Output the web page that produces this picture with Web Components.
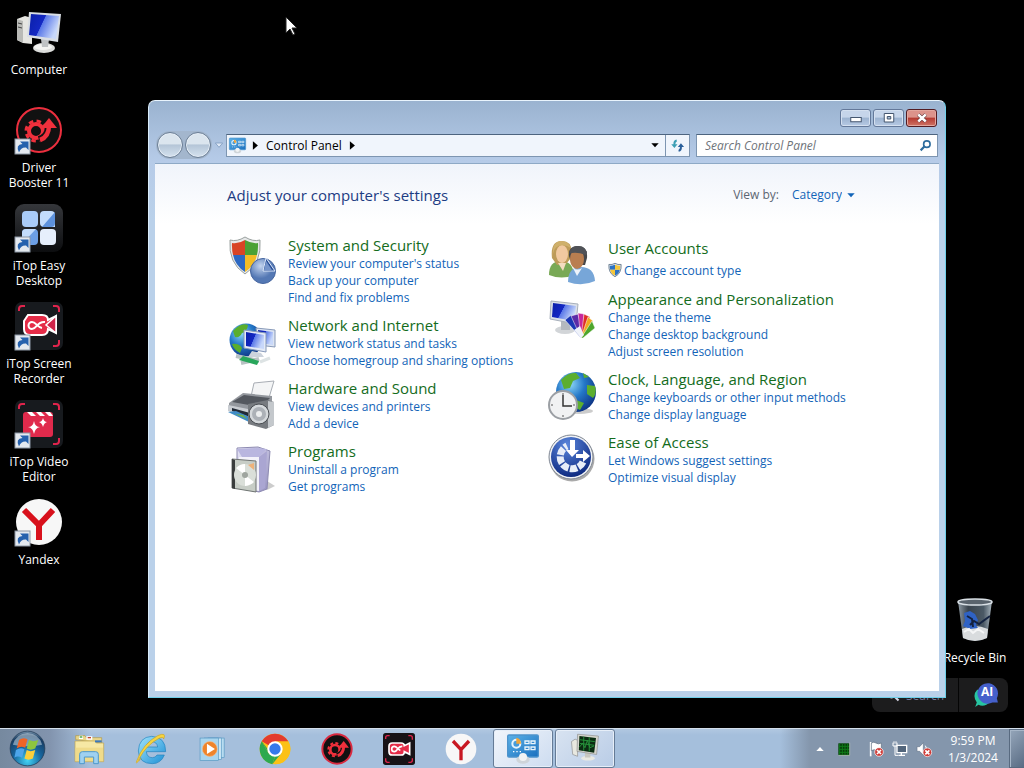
<!DOCTYPE html>
<html lang="en">
<head>
<meta charset="utf-8">
<meta name="viewport" content="width=device-width, initial-scale=1">
<title>Control Panel</title>
<style>
    html, body {
        margin: 0;
        height: 100%;
        background: #000;
        font-family: "Segoe UI", "Open Sans", sans-serif;
        font-size: 12px;
        overflow: hidden;
    }
</style>
</head>
<body>
<desktop-shell></desktop-shell>

<script>
const SHORTCUT = `
    <rect x="0" y="33" width="15" height="15" fill="#e4e9ef" stroke="#8d98a5"/>
    <path d="M4 46.500q-4-8 3.500-8.500L5 35.500h8.500V44l-2.500-2.500q-5-.5-7 5z" fill="#2561ad"/>`;

const GEAR = `
    <g fill="none" stroke="#f0303c">
        <circle cx="21" cy="25" r="7" stroke-width="4"/>
        <circle cx="21" cy="25" r="10" stroke-width="3" stroke-dasharray="4.5 3.4"/>
        <path d="M24 34c7-2 10-8 10-14" stroke="#111" stroke-width="8"/>
        <path d="M25 34c6-2 9-7 9-15" stroke-width="4.500"/>
    </g>
    <path d="M26 22l8-10 8 10z" fill="#f0303c"/>
    <circle cx="21" cy="25" r="4" fill="#111"/>`;

const CORNERS = `
    <path d="M4 9V7q0-3 3-3h3M38 4h3q3 0 3 3v3M44 38v3q0 3-3 3h-3" fill="none" stroke="#e0244c" stroke-width="2"/>`;

const GLOBE_DEFS = `
    <radialGradient id="sea" cx=".35" cy=".3" r=".8">
        <stop offset="0" stop-color="#8fd8f8"/><stop offset=".45" stop-color="#2478c8"/><stop offset="1" stop-color="#0b2c7c"/>
    </radialGradient>`;

const SCREEN_DEFS = `
    <linearGradient id="scr" x1="0" x2="1" y2=".4">
        <stop offset="0" stop-color="#0a1fa8"/><stop offset=".5" stop-color="#1428c4"/>
        <stop offset=".52" stop-color="#5a78e8"/><stop offset="1" stop-color="#c8d8fa"/>
    </linearGradient>`;

const ICONS = {
    computer: `<defs>${SCREEN_DEFS}</defs>
        <path d="M2 11l8-3 7 2v26l-9-1-6-3z" fill="#e6e6e2"/><path d="M2 11l6 2v22l-6-3z" fill="#b9bab7"/>
        <path d="M3 15l4 1M3 19l4 1" stroke="#444"/>
        <ellipse cx="29" cy="40" rx="11" ry="5" fill="#dcdddb"/><ellipse cx="28" cy="39" rx="9" ry="3" fill="#f4f4f2"/>
        <path d="M26 31h8l-1 8h-6z" fill="#bfc2c4"/>
        <path d="M14 4l32 2-3 28-31-5z" fill="#d9dee4"/><path d="M16 6l28 2-3 23-27-4z" fill="url(#scr)"/>`,
    booster: `<circle cx="24" cy="24" r="22" fill="#111" stroke="#ec2f3e" stroke-width="2"/>${GEAR}${SHORTCUT}`,
    easy: `<defs><linearGradient id="bg" y2="1" x2="0"><stop offset="0" stop-color="#35373b"/><stop offset="1" stop-color="#0c0d0f"/></linearGradient></defs>
        <rect width="48" height="48" rx="9" fill="url(#bg)"/>
        <rect x="7" y="7" width="16" height="16" rx="4" fill="#a9cbf7"/><path d="M29 7h7q4 0 4 4v12H29q-4 0-4-4v-8q0-4 4-4z" fill="#c3dcfb"/>
        <path d="M40 8v11q0 4-4 4h-9z" fill="#5e92dc"/><rect x="7" y="25" width="16" height="16" rx="4" fill="#6c9fe5"/>
        <path d="M7 40V29q0-4 4-4h10z" fill="#c3dcfb"/><rect x="25" y="25" width="16" height="16" rx="4" fill="#e6effc"/>${SHORTCUT}`,
    recorder: `<rect width="48" height="48" rx="7" fill="#171a1e"/>${CORNERS}
        <path d="M13 13h14q6 0 6 5l8-4v17l-8-4q0 6-6 6H15q-6 0-6-6V19z" fill="#e52c48" stroke="#fff" stroke-width="2"/>
        <path d="M41 14l-10 9 10 8z" fill="#ce244a" stroke="#fff" stroke-width="1.500"/>
        <path d="M30 20c-8-1-8 7-13 7a3 3 0 0 1 0-7c4 0 5 5 10 6" fill="none" stroke="#fff" stroke-width="2"/>${SHORTCUT}`,
    recorderbar: `<rect width="48" height="48" rx="4" fill="#171317"/>${CORNERS}<path d="M4 38v3q0 3 3 3h3" fill="none" stroke="#e0244c" stroke-width="2"/>
        <path d="M14 15h13q5 0 5 4l8-4v17l-8-4q0 5-5 5H14q-5 0-5-5v-8q0-5 5-5z" fill="#e52c48" stroke="#fff" stroke-width="2.500"/>
        <path d="M29 20c-7-1-7 8-12 8a3 3 0 0 1 0-8c4 0 5 5 9 6" fill="none" stroke="#fff" stroke-width="2.500"/>`,
    video: `<rect width="48" height="48" rx="7" fill="#171a1e"/>${CORNERS}
        <rect x="8" y="12" width="30" height="25" rx="3" fill="#e02a4c"/>
        <path d="M12 12h5l4 4h-5zM21 12h5l4 4h-5zM30 12h5l3 4h-4z" fill="#fff"/>
        <path d="M19 21q1 6 6 6-5 1-6 7-1-6-6-7 5 0 6-6zM28 18q1 4 4 4-3 1-4 5-1-4-4-5 3 0 4-4z" fill="#fff"/>${SHORTCUT}`,
    yandex: `<circle cx="24" cy="24" r="23" fill="#f7f7f7"/>
        <path d="M9 12l15 15 14-15M24 26v16" fill="none" stroke="#d8111c" stroke-width="6"/>${SHORTCUT}`,
    yandexbar: `<circle cx="24" cy="24" r="23" fill="#f7f7f7"/><path d="M12 12l12 13 12-13M24 24v17" fill="none" stroke="#c81822" stroke-width="5"/>`,
    boosterbar: `<circle cx="24" cy="24" r="22" fill="#111" stroke="#d92a40" stroke-width="3"/>${GEAR}`,
    bin: `<defs><linearGradient id="glass"><stop offset="0" stop-color="#8e9aa4"/><stop offset=".3" stop-color="#39434d"/><stop offset=".75" stop-color="#4b5965"/><stop offset="1" stop-color="#a8b4bd"/></linearGradient></defs>
        <path d="M7 5h34l-5 37q-12 6-24 0z" fill="url(#glass)"/><path d="M11 33q12-6 26 0l-1 9q-12 6-24 0z" fill="#d9dcde"/>
        <path d="M13 17l6-2 5 3 3 6-2 5 2 3-8 1-7-3 2-5z" fill="#2f62c4"/><path d="M16 20l5 3 1 8M19 29l4-4 5 3 11-8" stroke="#132240" stroke-width="2" fill="none"/>
        <path d="M13 36l5-3 4 4 5-4 6 4" stroke="#f4f5f6" stroke-width="2" fill="none"/>
        <ellipse cx="24" cy="6" rx="17" ry="3" fill="#59636d" stroke="#d9e0e6" stroke-width="1.500"/>`,
    security: `<defs><clipPath id="sh"><path d="M17 3q7 4 13 3 1 20-13 29Q3 26 4 6q7 1 13-3z"/></clipPath>
        <radialGradient id="ball" cx=".4" cy=".3"><stop offset="0" stop-color="#c3d4ef"/><stop offset="1" stop-color="#5478b4"/></radialGradient></defs>
        <path d="M17 0q8 5 15 3 2 23-15 34Q0 26 2 3q7 2 15-3z" fill="#e6e8e8" stroke="#9aa19f"/>
        <g clip-path="url(#sh)"><path d="M0 0h17v18H0z" fill="#d84425"/><path d="M17 0h17v18H17z" fill="#4ba135"/><path d="M0 18h17v20H0z" fill="#2c68c2"/><path d="M17 18h17v20H17z" fill="#f3bc24"/></g>
        <circle cx="35" cy="34" r="12.500" fill="url(#ball)" stroke="#45659f"/><path d="M35 34l3-13 9 13z" fill="#294f97" stroke="#dce8fa"/><path d="M36 33l2-9 6 9z" fill="#7594ca"/>`,
    network: `<defs>${GLOBE_DEFS}${SCREEN_DEFS}</defs><g transform="translate(0 2)"><circle cx="18" cy="21" r="16.500" fill="url(#sea)"/>
        <path d="M5 12q8-9 15-6-1 7-6 8-2 5-7 4zM4 25q7-1 10 4l-2 5q-6-3-8-9z" fill="#5aae2c"/>
        <path d="M28 9l19 2v17l-17-2z" fill="#dce4f2" stroke="#8799b8"/><path d="M30 11l15 2v13l-13-2z" fill="url(#scr)"/>
        <path d="M16 11l22 3v19l-22-4z" fill="#e4ebf7" stroke="#8799b8"/><path d="M18 13l18 3v14l-18-3z" fill="url(#scr)"/>
        <path d="M24 32l9 2 3 4H20z" fill="#ccd3dc"/><path d="M8 37l23 5M13 44l18-4" stroke="#b8c2c3" stroke-width="4"/><path d="M15 37l16 5-2 4-18-5z" fill="#29a65b"/><path d="M32 43l10-4" stroke="#dde3e4" stroke-width="3"/></g>`,
    hardware: `<path d="M26 3l20-2-6 20H22z" fill="#f4f5f6" stroke="#a8adb4"/><path d="M1 23l14-10 29 3v14l-18 9L1 30z" fill="#94989e"/>
        <path d="M4 22l12-7 26 3-9 9z" fill="#54585f"/><path d="M0 25l25 5v11L0 31z" fill="#c9cdd2"/><path d="M4 28l18 5v4l-18-6z" fill="#222a36"/>
        <path d="M0 32l8-1 16 7-3 4z" fill="#3f8cc7"/><path d="M7 34l8 1 4 4z" fill="#75b247"/>
        <path d="M20 24l20-4 6 2v23l-8 4-18-5z" fill="#777b80"/><path d="M40 21l6 1v23l-6 3z" fill="#c4c8cc"/>
        <circle cx="31" cy="34" r="10" fill="#d5d9dc" stroke="#494d52"/><circle cx="31" cy="34" r="7" fill="#acb1b7"/><circle cx="31" cy="34" r="3" fill="#eceeef"/>`,
    programs: `<defs><linearGradient id="box" x2="1" y2="1"><stop offset="0" stop-color="#e8e7f7"/><stop offset="1" stop-color="#9490bf"/></linearGradient></defs>
        <g transform="translate(0 2)"><path d="M39 45l8-4-8-5z" fill="#ccc"/><path d="M9 3l21-1 12 4-3 38-8 3-22-5z" fill="url(#box)" stroke="#8d8ab1"/>
        <path d="M9 4l5 8h17l8-8-10-1z" fill="#b9b6df"/><path d="M11 12h20v34l-20-3z" fill="#f3f2fa"/><path d="M31 12l8-6-2 37-6 3z" fill="#aaa6d2"/>
        <path d="M4 14l24 2v31L4 43z" fill="#c7cdc6" stroke="#6e7371"/><path d="M4 14l3 1v29l-3-1z" fill="#3a3d3d"/>
        <circle cx="17" cy="30" r="11" fill="#dadfd9"/><path d="M17 30L8 23q4-4 9-4zM17 30l9 7q-3 3-9 4z" fill="#fff"/><path d="M20 20l6-2v7z" fill="#eeb27a"/><circle cx="17" cy="30" r="3" fill="#9fa59f"/></g>`,
    users: `<path d="M1 35q0-14 12-14t13 14q-12 5-25 0z" fill="#79a956"/><path d="M4 18Q2 1 14 1t9 17l-5 6-9 1z" fill="#bd9b59"/><ellipse cx="14" cy="14" rx="6" ry="9" fill="#f1c9a0"/>
        <path d="M5 14Q7 3 19 6l4 2Q20 0 12 1 3 3 5 18z" fill="#cfb06b"/><path d="M10 23h8l-3 8z" fill="#f4dcc0"/>
        <path d="M20 42q0-15 13-15t14 14q-13 6-27 1z" fill="#77a6d8"/><path d="M21 16Q20 6 30 6t9 12l-2 7H24z" fill="#46474a"/>
        <ellipse cx="29" cy="19" rx="7" ry="10" fill="#b97e50"/><path d="M21 14q6-3 17 1l1-3q-3-7-11-6-6 1-7 8z" fill="#505257"/><path d="M25 28q4 3 9 0l-5 8z" fill="#eef4fb"/>`,
    appearance: `<defs>${SCREEN_DEFS}</defs><g transform="translate(1 10)"><ellipse cx="16" cy="29" rx="10" ry="4" fill="#d2d5d8"/><path d="M12 20h9v9h-9z" fill="#b4b9bf"/>
        <path d="M2 0l27 3-2 20L1 18z" fill="#dce1e8" stroke="#a8b0bb"/><path d="M4 2l23 3-2 15L3 16z" fill="url(#scr)"/>
        <g stroke="#fff" stroke-width=".5"><path d="M32 37L16 19l6-5 12 20z" fill="#1b37b5"/><path d="M32 37L22 15l7-2 6 21z" fill="#5b2ba8"/><path d="M32 37L29 12l6 1-1 23z" fill="#c6279c"/>
        <path d="M32 37L35 13l6 3-7 20z" fill="#de2d28"/><path d="M32 37L39 16l5 4-10 16z" fill="#efa820"/><path d="M32 37L43 20l3 7-12 10z" fill="#4da62c"/></g><path d="M25 29l6-4 4 9-3 3z" fill="#f0f3fa"/></g>`,
    clock: `<defs>${GLOBE_DEFS}</defs><ellipse cx="31" cy="40" rx="14" ry="3" fill="#ccc"/><circle cx="28" cy="21" r="20" fill="url(#sea)"/>
        <path d="M13 9Q20 1 28 2l4 5-7 3-3 7-6 1zM39 14l8 1q2 8-2 12l-6-4zM28 29l8 3-4 7-6-3zM35 2l6 4-5 1z" fill="#5cae2e"/>
        <circle cx="15" cy="34" r="14" fill="#f1f2f3" stroke="#9b9fa4" stroke-width="2"/><path d="M15 24v11h9" fill="none" stroke="#333" stroke-width="1.500"/>
        <path d="M15 22v2M15 44v2M3 34h2M25 34h2" stroke="#555"/>`,
    ease: `<defs><radialGradient id="disc" cx=".4" cy=".2" r=".8"><stop offset="0" stop-color="#5a86dc"/><stop offset="1" stop-color="#0e2b82"/></radialGradient></defs>
        <circle cx="24" cy="25" r="22.500" fill="#aaa"/><circle cx="23" cy="23" r="22" fill="#f0f2f5" stroke="#7f8794"/><circle cx="23" cy="23" r="20" fill="url(#disc)"/>
        <path d="M35 28a12 12 0 1 1-16-16" fill="none" stroke="#e8eef8" stroke-width="7" stroke-dasharray="7 1.500"/>
        <path d="M22 6h5v10h4l-7 7-6-7h4z" fill="#fff"/><path d="M28 20h7v-4l7 6-7 6v-4h-7z" fill="#fff"/>`,
    shield: `<defs><clipPath id="uac"><path d="M24 5q9 5 18 4 1 25-18 35Q5 34 6 9q9 1 18-4z"/></clipPath></defs>
        <path d="M24 1q10 6 21 4 2 30-21 42Q1 35 3 5q11 2 21-4z" fill="#dce4ec" stroke="#65788c" stroke-width="3"/>
        <g clip-path="url(#uac)"><path d="M0 0h24v23H0zM24 23h24v24H24z" fill="#2c72c4"/><path d="M24 0h24v23H24zM0 23h24v24H0z" fill="#f5c63a"/></g>`,
    panel: `<defs><linearGradient id="pn" x2="1" y2="1"><stop offset="0" stop-color="#5cb2e8"/><stop offset="1" stop-color="#1a6fbe"/></linearGradient></defs>
        <rect x="1" y="3" width="46" height="33" rx="2" fill="url(#pn)" stroke="#4c93cc" stroke-width="2"/>
        <circle cx="14" cy="16" r="6" fill="none" stroke="#e8f4fb" stroke-width="3"/><path d="M14 16V7a9 9 0 0 1 7 9z" fill="#f0a53a"/>
        <path d="M27 12h6v4h-6zM36 12h6v4h-6zM27 21h6v4h-6zM36 21h6v4h-6z" fill="none" stroke="#e8f4fb" stroke-width="2"/><path d="M9 28h14" stroke="#fff" stroke-width="2" stroke-dasharray="2 3"/>
        <ellipse cx="24" cy="40" rx="10" ry="6" fill="#ced4d9"/><circle cx="24" cy="36" r="6" fill="#f1f3f4"/>`,
    monitor: `<g transform="translate(0 0) scale(.92)"><path d="M4 14l6-4 4 2v26l-8-3z" fill="#e8e8e0" stroke="#888"/><ellipse cx="31" cy="41" rx="11" ry="4" fill="#e9e9e2"/><path d="M26 32h9v8h-9z" fill="#c8c8c0"/>
        <path d="M14 2l34 3-3 30-32-5z" fill="#d6d6ce" stroke="#888"/><path d="M17 5l27 3-3 24-25-4z" fill="#0b2c12"/>
        <path d="M17 23l5-6 4 7 4-12 4 12 7-3M18 11l24 3M18 17l23 3M24 6v23M33 7v23" fill="none" stroke="#27963c" stroke-width="1.500"/></g>`,
    start: `<defs><radialGradient id="orb" cx=".5" cy=".85" r=".9"><stop offset="0" stop-color="#42d3f4"/><stop offset=".45" stop-color="#17659d"/><stop offset=".8" stop-color="#183c62"/><stop offset="1" stop-color="#a4bdd0"/></radialGradient></defs>
        <circle cx="24" cy="24" r="22.500" fill="url(#orb)" stroke="#223b55"/><path d="M5 19q4-14 19-15 15 1 19 15-19 4-38 0z" fill="#d6e3ec" opacity=".5"/>
        <path d="M13 13q5-4 11-1l-3 11q-6-3-11 1z" fill="#ee6427"/><path d="M26 13q6 3 12 0l-4 11q-6 3-11 0z" fill="#8dc63f"/>
        <path d="M9 26q6-4 11-1l-3 11q-6-3-10 0z" fill="#4da5ea"/><path d="M23 26q5 3 11 0l-3 11q-6 3-11 0z" fill="#fbcf3b"/>`,
    explorer: `<path d="M4 10V4h14l2 3h23v8z" fill="#e8d68c" stroke="#b39a46"/><path d="M9 4h6v5H9zM20 5h9v5h-9z" fill="#fff"/><path d="M10 5h4v2h-4z" fill="#3a9d3a"/><path d="M22 6h5v2h-5z" fill="#c44a2e"/>
        <path d="M3 12h30l2 3h11v28H3z" fill="#f6e8a4" stroke="#bca34f"/><path d="M4 22h41v20H4z" fill="#efdb8a"/><path d="M33 11h10v3H33z" fill="#3c78bb"/>
        <path d="M10 46V32q0-4 4-4h20q4 0 4 4v14h-7V36H17v10z" fill="#9fd1f0" stroke="#4d98cb" stroke-width="1.500"/>`,
    explore: `<defs><linearGradient id="ie" x2="1" y2="1"><stop offset="0" stop-color="#a1e3fb"/><stop offset="1" stop-color="#1c8fd6"/></linearGradient></defs>
        <path d="M44 33q-5 13-18 13Q6 46 5 27 6 6 25 5q21 1 21 23H17q1 9 9 9 5 0 7-4zM17 21h17q-1-8-9-8-7 0-8 8z" fill="url(#ie)" stroke="#2382bd"/>
        <path d="M9 38Q-1 50 3 41 12 16 34 4q14-6 9 5 0-4-7-1Q17 18 6 39q-2 5 3-1z" fill="#f6d43f" stroke="#cda526"/>`,
    player: `<g transform="translate(2 5) scale(.86)"><rect x="17" y="3" width="28" height="34" fill="#b8dcf0" stroke="#4a90bd"/><rect x="11" y="3" width="29" height="37" fill="#cce6f4" stroke="#4a90bd"/><rect x="3" y="3" width="32" height="39" fill="#a9d5ee" stroke="#4a90bd"/>
        <circle cx="20" cy="22" r="13" fill="#ee842b" stroke="#f8c18f"/><path d="M15 13l14 9-14 9z" fill="#fff"/></g>`,
    chrome: `<circle cx="24" cy="24" r="23" fill="#fbc116"/><path d="M24 24L4.080 12.500A23 23 0 0 1 43.900 12.500H24z" fill="#e33b2e"/>
        <path d="M4.080 12.500L14 30 24 35 20 46.700A23 23 0 0 1 4.080 12.500z" fill="#2da94f"/><path d="M14 30L4.080 12.500 13 24zM24 35l-4 11.700L34 30z" fill="#2da94f"/><path d="M24 47l10-17 10-17.500A23 23 0 0 1 24 47z" fill="#fbc116"/>
        <circle cx="24" cy="24" r="11.500" fill="#fff"/><circle cx="24" cy="24" r="8.500" fill="#3479ea"/>`,
    green: `<path d="M7 7h34v36H7z" fill="#063d09"/><path d="M41 5v38H7" fill="none" stroke="#cfd6cf" stroke-width="2"/><path d="M11 8v34M19 8v34M27 8v34M35 8v34M8 16h31M8 25h31M8 34h31" stroke="#0f7a1a" stroke-width="3"/>`,
    flag: `<path d="M8 3v43" stroke="#fff" stroke-width="5"/><path d="M10 6q8-5 14 0t16 0v22q-9 4-15 0t-15 1z" fill="#fff" stroke="#59697c" stroke-width="2"/><circle cx="33" cy="33" r="13" fill="#cf3a36" stroke="#fff" stroke-width="2"/><path d="M27 27l12 12M39 27L27 39" stroke="#fff" stroke-width="5"/>`,
    wired: `<path d="M15 13h29v22H15z" fill="#52657b" stroke="#fff" stroke-width="4"/><path d="M28 35v7M19 43h20" stroke="#fff" stroke-width="4"/><path d="M3 5v10h12V5M6 1v7M12 1v7M9 14v29h9" fill="none" stroke="#fff" stroke-width="3"/>`,
    mute: `<path d="M3 17h8L22 5v38L11 31H3z" fill="#fff" stroke="#697a8e" stroke-width="2"/><path d="M28 14q7 8 0 19" fill="none" stroke="#fff" stroke-width="3"/><circle cx="34" cy="34" r="13" fill="#cf3a36" stroke="#fff" stroke-width="2"/><path d="M28 28l12 12M40 28L28 40" stroke="#fff" stroke-width="5"/>`,
    lens: `<circle cx="29" cy="19" r="12" fill="none" stroke="currentColor" stroke-width="6"/><path d="M20 28L6 42" stroke="currentColor" stroke-width="8"/>`,
    find: `<circle cx="19" cy="19" r="14" fill="none" stroke="currentColor" stroke-width="6"/><path d="M29 29l14 14" stroke="currentColor" stroke-width="7"/>`,
    refresh: `<path d="M21 5q-11 2-10 15H4l10 12 10-12h-7q0-7 5-9z" fill="#3d9fb4"/><path d="M28 44q11-2 10-15h7L35 17 25 29h7q0 7-5 9z" fill="#2a5f9a"/>`,
    down: `<path d="M2 13h44L24 37z" fill="currentColor"/>`,
    up: `<path d="M2 36h44L24 12z" fill="currentColor"/>`,
    right: `<path d="M10 1v46l27-23z" fill="currentColor"/>`,
    hollow: `<path d="M2 12h44L24 38z" fill="#dfe9f6" stroke="#7f9cc0" stroke-width="5"/>`,
    min: `<rect x="3" y="22" width="42" height="17" fill="#fff" stroke="#44566f" stroke-width="4"/>`,
    max: `<path d="M5 6h38v34H5z" fill="#fff" stroke="#44566f" stroke-width="4"/><path d="M17 18h14v10H17z" fill="#a9bdd6" stroke="#44566f" stroke-width="4"/>`,
    close: `<path d="M9 10l30 28M39 10L9 38" stroke="#54282c" stroke-width="15"/><path d="M9 10l30 28M39 10L9 38" stroke="#fff" stroke-width="10"/>`,
    chat: `<path d="M4 46l3-8Q-2 25 8 14l24 22q-11 12-22 6z" fill="#27c5a2"/><path d="M46 38l-2-8A19 19 0 1 0 36 38z" fill="#4560cb"/>`
};

class GlyphIcon extends HTMLElement {
    connectedCallback() {
        if (!this.shadowRoot) this.attachShadow({ mode: 'open' });
        this.shadowRoot.innerHTML = `
            <style>
                :host { display: block; flex: none; width: var(--icon-size, 48px); height: var(--icon-size, 48px); }
                svg { display: block; width: 100%; height: 100%; overflow: visible; }
            </style>
            <svg viewBox="0 0 48 48" aria-hidden="true">${ICONS[this.getAttribute('name')] || ''}</svg>
        `;
    }
}

class DesktopItem extends HTMLElement {
    constructor() {
        super();
        this.attachShadow({ mode: 'open' });
    }

    connectedCallback() {
        this.shadowRoot.innerHTML = `
            <style>
                :host { display: block; width: 78px; height: 98px; }
                button {
                    display: flex;
                    flex-direction: column;
                    align-items: center;
                    gap: 6px;
                    width: 100%;
                    padding: 0;
                    border: none;
                    background: none;
                    color: #fff;
                    font: inherit;
                    line-height: 15px;
                    text-shadow: 0 1px 2px #000;
                }
            </style>
            <button type="button">
                <glyph-icon name="${this.getAttribute('icon')}"></glyph-icon>
                <slot></slot>
            </button>
        `;
    }
}

class SearchGadget extends HTMLElement {
    constructor() {
        super();
        this.attachShadow({ mode: 'open' });
        this.shadowRoot.innerHTML = `
            <style>
                :host { display: flex; height: 34px; border-radius: 8px; background: #1c1c1d; overflow: hidden; }
                button { display: flex; align-items: center; border: none; background: none; font: inherit; color: #77779a; }
                .search { gap: 6px; padding: 0 14px; width: 86px; --icon-size: 14px; }
                .search glyph-icon { color: #d8d8e8; }
                .ai { position: relative; width: 50px; padding: 0 12px 0 14px; border-left: 1px solid #050505; --icon-size: 26px; }
                .ai span { position: absolute; left: 22px; top: 5px; color: #fff; font-weight: 700; line-height: 18px; }
            </style>
            <button type="button" class="search"><glyph-icon name="find"></glyph-icon>Search</button>
            <button type="button" class="ai"><glyph-icon name="chat"></glyph-icon><span>AI</span></button>
        `;
    }
}

class CategoryEntry extends HTMLElement {
    constructor() {
        super();
        this.attachShadow({ mode: 'open' });
    }

    connectedCallback() {
        const links = this.getAttribute('links').split('|');
        const shield = this.hasAttribute('shield');
        this.shadowRoot.innerHTML = `
            <style>
                :host { display: flex; align-items: flex-start; gap: 12px; }
                /* the art may hang below a short entry without making it taller */
                .art { margin: 2px 0 -8px; }
                h2 { margin: 0; font-size: 15px; font-weight: 400; line-height: 20px; }
                h2 a { color: #146c1c; }
                a { color: #1264b8; text-decoration: none; white-space: nowrap; }
                a:hover { text-decoration: underline; }
                ul { margin: 0; padding: 0; list-style: none; line-height: 17px; }
                li { display: flex; align-items: center; gap: 2px; --icon-size: 14px; }
                .shielded li { box-sizing: border-box; height: 22px; padding-top: 2px; }
            </style>
            <glyph-icon class="art" name="${this.getAttribute('icon')}"></glyph-icon>
            <div>
                <h2><a href="#"><slot></slot></a></h2>
                <ul class="${shield ? 'shielded' : ''}">
                    ${links.map(text => `<li>${shield ? '<glyph-icon name="shield"></glyph-icon>' : ''}<a href="#">${text}</a></li>`).join('')}
                </ul>
            </div>
        `;
    }
}

class NavBar extends HTMLElement {
    constructor() {
        super();
        this.attachShadow({ mode: 'open' });
        this.shadowRoot.innerHTML = `
            <style>
                :host { display: flex; align-items: center; height: 36px; padding: 0 1px; }
                button { display: flex; align-items: center; padding: 0; border: none; background: none; font: inherit; }
                .travel { display: flex; gap: 2px; padding: 1px; border-radius: 14px; background: #a3b6cd; }
                .travel button {
                    width: 26px;
                    height: 26px;
                    border: 1px solid #6b7e95;
                    border-radius: 50%;
                    background: linear-gradient(#dbe5ee 0 45%, #b4c5d7 50%, #d5e2ef);
                    box-shadow: inset 0 0 0 1px #e6eef6;
                }
                .recent { width: 14px; justify-content: center; --icon-size: 8px; }
                .address, .find {
                    display: flex;
                    box-sizing: border-box;
                    height: 23px;
                    border: 1px solid #7d95b1;
                    border-top-color: #4d647f;
                    background: #f0f5fc;
                }
                .address { flex: 462; min-width: 0; }
                .place { margin: 0 2px; --icon-size: 17px; }
                .crumb { --icon-size: 9px; gap: 6px; padding: 0 3px; flex: 1; }
                .drop { width: 20px; justify-content: center; --icon-size: 8px; }
                .refresh { width: 24px; border-left: 1px solid #7d95b1; justify-content: center; --icon-size: 15px; }
                .find { flex: 227; min-width: 0; margin-left: 6px; align-items: center; background: #fff; color: #2e6d9e; --icon-size: 13px; padding: 0 5px 0 8px; }
                input { flex: 1; min-width: 0; padding: 0; border: none; outline: none; background: none; font: inherit; }
                input::placeholder { color: #6f747a; font-style: italic; opacity: 1; }
            </style>
            <div class="travel">
                <button type="button" aria-label="Back"></button>
                <button type="button" aria-label="Forward"></button>
            </div>
            <button type="button" class="recent" aria-label="Recent pages"><glyph-icon name="hollow"></glyph-icon></button>
            <div class="address">
                <button type="button" class="place" aria-label="Locations"><glyph-icon name="panel"></glyph-icon></button>
                <button type="button" class="crumb"><glyph-icon name="right"></glyph-icon>Control Panel<glyph-icon name="right"></glyph-icon></button>
                <button type="button" class="drop" aria-label="Previous locations"><glyph-icon name="down"></glyph-icon></button>
                <button type="button" class="refresh" aria-label="Refresh"><glyph-icon name="refresh"></glyph-icon></button>
            </div>
            <div class="find">
                <input type="search" placeholder="Search Control Panel" aria-label="Search Control Panel">
                <glyph-icon name="lens"></glyph-icon>
            </div>
        `;
    }
}

class ViewPicker extends HTMLElement {
    constructor() {
        super();
        this.attachShadow({ mode: 'open' });
        this.shadowRoot.innerHTML = `
            <style>
                :host { display: flex; align-items: center; color: #1264b8; --icon-size: 8px; }
                label { margin-right: 13px; color: #5c6672; }
                select { appearance: none; margin: 0 5px 0 0; padding: 0; border: none; outline: none; background: none; color: inherit; font: inherit; }
            </style>
            <label for="view">View by:</label>
            <select id="view"><option>Category</option></select>
            <glyph-icon name="down"></glyph-icon>
        `;
    }
}

class PanelWindow extends HTMLElement {
    constructor() {
        super();
        this.attachShadow({ mode: 'open' });
        this.shadowRoot.innerHTML = `
            <style>
                :host {
                    display: flex;
                    flex-direction: column;
                    box-sizing: border-box;
                    padding: 0 6px 6px;
                    border: 1px solid #6fd0ea;
                    border-top-color: #e8f4fd;
                    border-left-color: #d9ecfa;
                    border-radius: 7px 7px 0 0;
                    background: linear-gradient(#9ab3d0, #b6cbe8 60px, #bad1ea 120px);
                }
                .caption { display: flex; justify-content: flex-end; gap: 2px; height: 18px; padding: 8px 2px 0; --icon-size: 12px; }
                .caption button {
                    display: flex;
                    align-items: center;
                    justify-content: center;
                    width: 31px;
                    padding: 0;
                    border: 1px solid #64799a;
                    border-radius: 3px;
                    background: linear-gradient(#c6d5ea 0 45%, #9cb3d0 50%, #b7cae4);
                    box-shadow: inset 0 0 0 1px #d4e0f0;
                }
                .caption .close {
                    border-color: #531c22;
                    background: linear-gradient(#dc938b 0 45%, #b53a31 50%, #cf7465);
                    box-shadow: inset 0 0 0 1px #e3a79e;
                }
                main {
                    flex: 1;
                    min-height: 0;
                    padding: 0 84px 0 72px;
                    border-top: 1px solid #8ea9c6;
                    background: linear-gradient(#f0f4fb, #fff 60px);
                    overflow: hidden;
                }
                header { display: flex; justify-content: space-between; align-items: center; height: 61px; }
                h1 { margin: 0; color: #1d3c83; font-size: 15px; font-weight: 400; }
                .columns { display: grid; grid-template-columns: 320px 1fr; margin: 10px 0 0 1px; }
                .column { display: flex; flex-direction: column; gap: 9px; }
                .column + .column { padding-top: 3px; }
            </style>
            <div class="caption">
                <button type="button" aria-label="Minimize"><glyph-icon name="min"></glyph-icon></button>
                <button type="button" aria-label="Maximize"><glyph-icon name="max"></glyph-icon></button>
                <button type="button" class="close" aria-label="Close"><glyph-icon name="close"></glyph-icon></button>
            </div>
            <nav-bar></nav-bar>
            <main>
                <header><h1>Adjust your computer's settings</h1><view-picker></view-picker></header>
                <div class="columns">
                    <div class="column">
                        <category-entry icon="security" links="Review your computer's status|Back up your computer|Find and fix problems">System and Security</category-entry>
                        <category-entry icon="network" links="View network status and tasks|Choose homegroup and sharing options">Network and Internet</category-entry>
                        <category-entry icon="hardware" links="View devices and printers|Add a device">Hardware and Sound</category-entry>
                        <category-entry icon="programs" links="Uninstall a program|Get programs">Programs</category-entry>
                    </div>
                    <div class="column">
                        <category-entry icon="users" shield links="Change account type">User Accounts</category-entry>
                        <category-entry icon="appearance" links="Change the theme|Change desktop background|Adjust screen resolution">Appearance and Personalization</category-entry>
                        <category-entry icon="clock" links="Change keyboards or other input methods|Change display language">Clock, Language, and Region</category-entry>
                        <category-entry icon="ease" links="Let Windows suggest settings|Optimize visual display">Ease of Access</category-entry>
                    </div>
                </div>
            </main>
        `;
    }
}

class TaskBar extends HTMLElement {
    constructor() {
        super();
        this.attachShadow({ mode: 'open' });
        const apps = [
            ['explorer', 'Explorer'], ['explore', 'Internet Explorer'], ['player', 'Media Player'],
            ['chrome', 'Chrome'], ['boosterbar', 'Driver Booster'], ['recorderbar', 'Screen Recorder'],
            ['yandexbar', 'Yandex'], ['panel', 'Control Panel', 'open active'], ['monitor', 'Monitor', 'open']
        ];
        this.shadowRoot.innerHTML = `
            <style>
                :host {
                    display: flex;
                    height: 39px;
                    border-top: 1px solid #d3dfeb;
                    color: #fff;
                    background:
                        linear-gradient(90deg, #76899f, #8294ae 50px, transparent 90px) left / 100px 100% no-repeat,
                        linear-gradient(90deg, transparent, #8496ac 30px) right / 244px 100% no-repeat,
                        linear-gradient(#b1c8e1, #a5bfdc 6px);
                }
                button { display: flex; align-items: center; justify-content: center; box-sizing: border-box; padding: 0; border: none; background: none; font: inherit; color: inherit; }
                .start { width: 54px; margin-right: 5px; --icon-size: 37px; }
                .apps { display: flex; gap: 2px; flex: 1; --icon-size: 32px; }
                .apps button { width: 60px; }
                .apps .open { border: 1px solid #657b96; border-radius: 3px; background: linear-gradient(135deg, #d8e3f1, #b9cce6); box-shadow: inset 0 0 0 1px #e6eef8; }
                .apps .active { background: linear-gradient(135deg, #f1f5fb, #cddcf0); }
                .tray { display: flex; align-items: center; gap: 8px; --icon-size: 16px; }
                .tray .more { --icon-size: 8px; margin-right: 4px; }
                .tray .meter { margin-right: 8px; }
                .clock { flex-direction: column; width: 54px; margin: 0 9px 0 6px; line-height: 17px; height: 100%; }
                .peek { width: 15px; height: 100%; border: 1px solid #586a80; border-right: none; background: linear-gradient(135deg, #95a6ba, #596c84); box-shadow: inset 1px 1px 0 #a6b6c8; }
            </style>
            <button type="button" class="start" aria-label="Start"><glyph-icon name="start"></glyph-icon></button>
            <div class="apps">
                ${apps.map(([icon, label, state]) => `
                    <button type="button" class="${state || ''}" aria-label="${label}"><glyph-icon name="${icon}"></glyph-icon></button>
                `).join('')}
            </div>
            <div class="tray">
                <button type="button" class="more" aria-label="Show hidden icons"><glyph-icon name="up"></glyph-icon></button>
                <glyph-icon class="meter" name="green"></glyph-icon>
                <glyph-icon name="flag"></glyph-icon>
                <glyph-icon name="wired"></glyph-icon>
                <glyph-icon name="mute"></glyph-icon>
                <button type="button" class="clock"><span>9:59 PM</span><span>1/3/2024</span></button>
            </div>
            <button type="button" class="peek" aria-label="Show desktop"></button>
        `;
    }
}

class DesktopShell extends HTMLElement {
    constructor() {
        super();
        this.attachShadow({ mode: 'open' });
        this.shadowRoot.innerHTML = `
            <style>
                :host { display: flex; flex-direction: column; height: 100vh; background: #000; }
                .space { position: relative; flex: 1; min-height: 0; }
                .shortcuts { display: flex; flex-direction: column; padding-top: 8px; width: 78px; }
                .bin { position: absolute; right: 10px; bottom: 34px; }
                search-gadget { position: absolute; right: 16px; bottom: 16px; }
                panel-window { position: absolute; inset: 100px 78px 30px 148px; }
                .pointer { position: absolute; left: 285px; top: 16px; width: 12px; height: 20px; }
            </style>
            <div class="space">
                <div class="shortcuts">
                    <desktop-item icon="computer">Computer</desktop-item>
                    <desktop-item icon="booster">Driver<br>Booster 11</desktop-item>
                    <desktop-item icon="easy">iTop Easy<br>Desktop</desktop-item>
                    <desktop-item icon="recorder">iTop Screen<br>Recorder</desktop-item>
                    <desktop-item icon="video">iTop Video<br>Editor</desktop-item>
                    <desktop-item icon="yandex">Yandex</desktop-item>
                </div>
                <desktop-item class="bin" icon="bin">Recycle Bin</desktop-item>
                <search-gadget></search-gadget>
                <panel-window></panel-window>
                <svg class="pointer" viewBox="0 0 12 20" aria-hidden="true"><path d="M1 1v16l4-4 3 6 2-1-3-6h5z" fill="#fff" stroke="#222"/></svg>
            </div>
            <task-bar></task-bar>
        `;
    }
}

customElements.define('glyph-icon', GlyphIcon);
customElements.define('desktop-item', DesktopItem);
customElements.define('search-gadget', SearchGadget);
customElements.define('category-entry', CategoryEntry);
customElements.define('nav-bar', NavBar);
customElements.define('view-picker', ViewPicker);
customElements.define('panel-window', PanelWindow);
customElements.define('task-bar', TaskBar);
customElements.define('desktop-shell', DesktopShell);
</script>
</body>
</html>
